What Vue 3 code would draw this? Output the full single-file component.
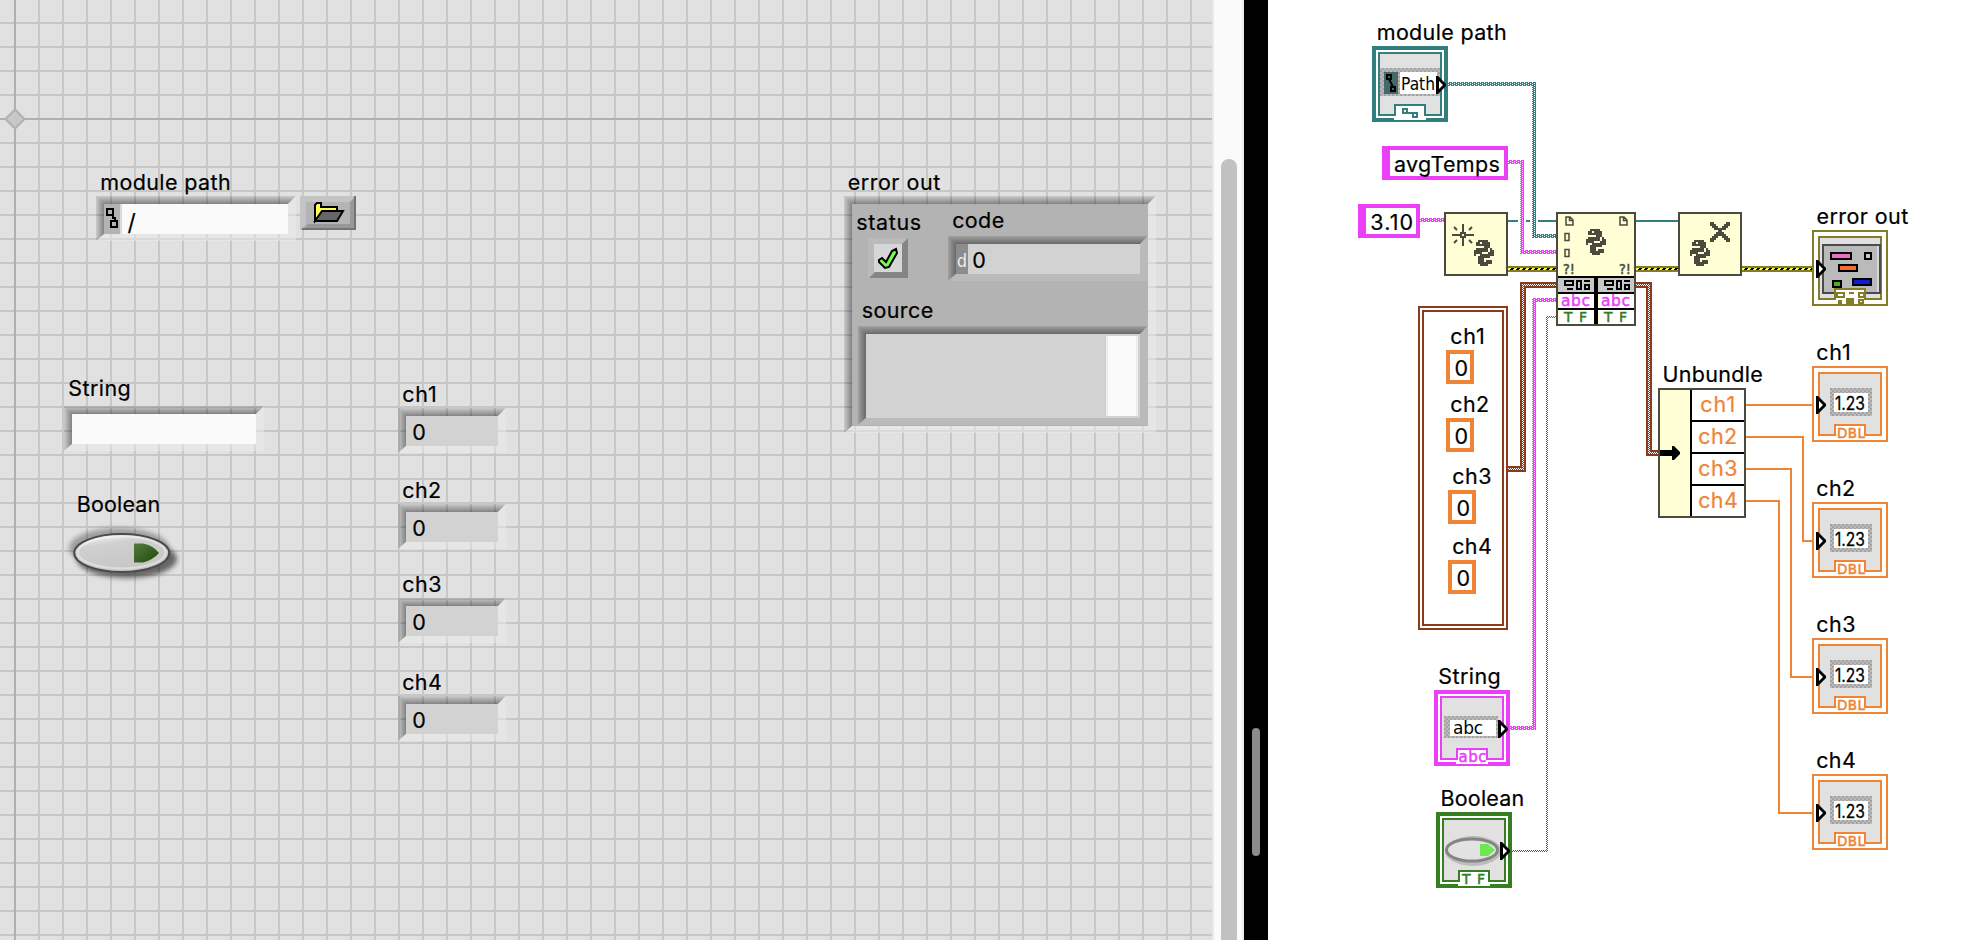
<script setup>
const fields = [
  { x: 104, y: 204, w: 184, h: 30, fill: '#fafafa' },
  { x: 72, y: 414, w: 184, h: 30, fill: '#fafafa' },
  { x: 406, y: 416, w: 92, h: 30, fill: '#d2d2d2' },
  { x: 406, y: 512, w: 92, h: 30, fill: '#d2d2d2' },
  { x: 406, y: 606, w: 92, h: 30, fill: '#d2d2d2' },
  { x: 406, y: 704, w: 92, h: 30, fill: '#d2d2d2' },
  { x: 852, y: 204, w: 296, h: 222, fill: '#b3b3b3' },
  { x: 956, y: 244, w: 184, h: 30, fill: '#d2d2d2' },
  { x: 866, y: 334, w: 274, h: 84, fill: '#d2d2d2' },
]

const panelLabels = [
  { t: 'module path', x: 101, r: 229.5, y: 190 },
  { t: 'String', x: 69, r: 129.6, y: 396 },
  { t: 'Boolean', x: 77.5, r: 159, y: 512 },
  { t: 'ch1', x: 403, r: 435.5, y: 402 },
  { t: 'ch2', x: 403, r: 440, y: 498 },
  { t: 'ch3', x: 403, r: 440.3, y: 592 },
  { t: 'ch4', x: 403, r: 440.6, y: 690 },
  { t: 'error out', x: 848.5, r: 939, y: 190 },
  { t: 'status', x: 857, r: 920, y: 229.5 },
  { t: 'code', x: 953, r: 1003, y: 228 },
  { t: 'source', x: 862.5, r: 932, y: 318 },
  { t: '0', x: 413, r: 425, y: 440 },
  { t: '0', x: 413, r: 425, y: 536 },
  { t: '0', x: 413, r: 425, y: 630 },
  { t: '0', x: 413, r: 425, y: 728 },
  { t: '0', x: 973, r: 985, y: 268 },
]

const diagramLabels = [
  { t: 'module path', x: 1377.5, r: 1505.5, y: 40 },
  { t: 'avgTemps', x: 1394.7, r: 1498.7, y: 172 },
  { t: '3.10', x: 1371, r: 1412, y: 230 },
  { t: 'error out', x: 1817.3, r: 1907, y: 224 },
  { t: 'ch1', x: 1817, r: 1849.5, y: 360 },
  { t: 'ch2', x: 1817, r: 1854, y: 496 },
  { t: 'ch3', x: 1817, r: 1854.3, y: 632 },
  { t: 'ch4', x: 1817, r: 1854.6, y: 768 },
  { t: 'Unbundle', x: 1663.3, r: 1761.5, y: 382 },
  { t: 'String', x: 1439, r: 1499.5, y: 684 },
  { t: 'Boolean', x: 1441.3, r: 1523, y: 806 },
  { t: 'ch1', x: 1451, r: 1483.5, y: 344 },
  { t: 'ch2', x: 1451, r: 1488, y: 412 },
  { t: 'ch3', x: 1453, r: 1490.3, y: 484 },
  { t: 'ch4', x: 1453, r: 1490.6, y: 554 },
  { t: '0', x: 1455.2, r: 1467, y: 376 },
  { t: '0', x: 1455.2, r: 1467, y: 444 },
  { t: '0', x: 1457.2, r: 1469, y: 516 },
  { t: '0', x: 1457.2, r: 1469, y: 586 },
]

const unbundleRows = [
  { t: 'ch1', x: 1701, r: 1734, y: 412 },
  { t: 'ch2', x: 1699, r: 1736, y: 444 },
  { t: 'ch3', x: 1699, r: 1736.3, y: 476 },
  { t: 'ch4', x: 1699, r: 1736.6, y: 508 },
]

const constants = [
  { x: 1446, y: 350 },
  { x: 1446, y: 418 },
  { x: 1448, y: 490 },
  { x: 1448, y: 560 },
]

const indicators = [366, 502, 638, 774]

const errorWires = [
  [1508, 1556],
  [1636, 1678],
  [1742, 1812],
]

const beads = [
  { c: '#337f7f', d: 'M1448 82H1536V234H1556V238H1532V86H1448z' },
  { c: '#ea3ff7', d: 'M1508 160H1524V250H1556V254H1520V164H1508z' },
  { c: '#ea3ff7', d: 'M1420 218H1444V222H1420z' },
  { c: '#ea3ff7', d: 'M1510 726H1532V298H1556V302H1536V730H1510z' },
]

const braids = ['M1508 469H1523V285H1556', 'M1636 285H1649V453H1658']

const dblWires = [
  'M1746 405H1812',
  'M1746 437H1803V541H1812',
  'M1746 469H1791V677H1812',
  'M1746 501H1779V813H1812',
]

// Turns rows of '#' cells into one path of squares.
function cells(rows, size) {
  let d = ''
  rows.forEach((row, j) => {
    for (let i = 0; i < row.length; i++) {
      if (row[i] === '#') d += `M${i * size} ${j * size}h${size}v${size}h${-size}z`
    }
  })
  return d
}

const snake = cells([
  '..#####...',
  '.##.####..',
  '.#######..',
  '.....###..',
  '.######.#.',
  '#######.##',
  '####...###',
  '#..#######',
  '..######..',
  '..###.....',
  '..###.###.',
  '..#######.',
  '...####...',
], 2)

const cross = cells([
  '##......##',
  '###....###',
  '.###..###.',
  '..######..',
  '....##....',
  '...####...',
  '..######..',
  '.###..###.',
  '###....###',
  '##......##',
], 2)

const snakes = [
  { x: 1474, y: 240 },
  { x: 1586, y: 229 },
  { x: 1690, y: 240 },
]

function bevelTop(f) {
  return `M${f.x - 8} ${f.y - 8}H${f.x + f.w + 8}L${f.x + f.w} ${f.y}H${f.x}z`
}
function bevelLeft(f) {
  return `M${f.x - 8} ${f.y - 8}L${f.x} ${f.y}V${f.y + f.h}L${f.x - 8} ${f.y + f.h + 7}z`
}
function bevelLight(f) {
  const r = f.x + f.w
  const b = f.y + f.h
  return `M${r + 8} ${f.y - 8}V${b + 7}H${f.x - 8}L${f.x} ${b}H${r}V${f.y}z`
}
</script>

<template>
  <main class="workspace">
    <section class="panel">
      <svg class="canvas" width="1214" height="940" viewBox="0 0 1214 940">
        <defs>
          <pattern id="grid" x="14" y="22" width="24" height="24" patternUnits="userSpaceOnUse">
            <rect width="24" height="24" fill="#e1e1e1" />
            <path d="M0 1H24M1 0V24" stroke="#c7c7c7" stroke-width="2" />
          </pattern>
          <linearGradient id="topShade" x1="0" y1="0" x2="0" y2="1">
            <stop offset="0" stop-color="#000" stop-opacity=".1" />
            <stop offset="1" stop-color="#000" stop-opacity=".42" />
          </linearGradient>
          <linearGradient id="leftShade" x1="0" y1="0" x2="1" y2="0">
            <stop offset="0" stop-color="#000" stop-opacity=".1" />
            <stop offset="1" stop-color="#000" stop-opacity=".42" />
          </linearGradient>
          <linearGradient id="cap" x1="0" y1="0" x2="0.35" y2="1">
            <stop offset="0" stop-color="#fff" />
            <stop offset=".35" stop-color="#d0d0d0" />
            <stop offset="1" stop-color="#c6c6c6" />
          </linearGradient>
          <linearGradient id="led" x1="0" y1="0" x2="1" y2="1">
            <stop offset="0" stop-color="#56783f" />
            <stop offset="1" stop-color="#1e4a08" />
          </linearGradient>
          <filter id="soft" x="-20%" y="-40%" width="140%" height="180%">
            <feGaussianBlur stdDeviation="2.500" />
          </filter>
        </defs>
        <rect width="1212" height="940" fill="url(#grid)" />
        <rect x="1212" width="2" height="940" fill="#e9e9e9" />
        <path d="M15 0V940M0 119H1212" stroke="#b0b0b0" stroke-width="2" fill="none" />
        <path d="M15 109.500L24.500 119L15 128.500L5.500 119z" fill="#c8c8c8" stroke="#b0b0b0" stroke-width="2" />

        <g v-for="(f, i) in fields" :key="i">
          <path :d="bevelTop(f)" fill="url(#topShade)" />
          <path :d="bevelLeft(f)" fill="url(#leftShade)" />
          <path :d="bevelLight(f)" fill="#ececec" fill-opacity=".5" v-if="i < 7" />
          <path :d="bevelLight(f)" fill="#bababa" v-else />
          <rect :x="f.x" :y="f.y" :width="f.w" :height="f.h" :fill="f.fill" />
        </g>

        <!-- path control -->
        <rect x="104" y="204" width="18" height="30" fill="#b3b3b3" />
        <path d="M107 209h6v6h-6zM111 221h6v6h-6zM113 215v3h2v3" fill="none" stroke="#000" stroke-width="2" />
        <path d="M121 204V234" stroke="#dcdcdc" stroke-width="2" />
        <text class="label slash" x="127.500" y="231">/</text>
        <g>
          <rect x="300" y="196" width="56" height="34" fill="#b4b4b4" />
          <path d="M300 196H356L350 202H306V224L300 230z" fill="#c4c4c4" />
          <path d="M356 196V230H302L308 224H350V202z" fill="#989898" />
          <path d="M355 196V229H302" fill="none" stroke="#747474" stroke-width="2" />
          <path d="M315 221V205L317 203H321V207H337V211H323L315 221z" fill="#ffff54" stroke="#000" stroke-width="2" />
          <path d="M322 211H343L337 221H315z" fill="#666" stroke="#000" stroke-width="2" />
        </g>

        <!-- boolean button -->
        <ellipse cx="127" cy="559" rx="50" ry="19" fill="#000" fill-opacity=".55" filter="url(#soft)" />
        <ellipse cx="119" cy="548" rx="50" ry="20" fill="#000" fill-opacity=".3" filter="url(#soft)" />
        <ellipse cx="121.700" cy="553" rx="47.500" ry="19" fill="url(#cap)" stroke="#4a4a4a" stroke-width="2" />
        <ellipse cx="121.700" cy="552.500" rx="44" ry="16" fill="none" stroke="#fff" stroke-opacity=".4" stroke-width="2" />
        <path d="M134 543.500H143Q153 545 159 553Q153 560 143 562.500H134z" fill="url(#led)" />

        <!-- status light -->
        <rect x="868" y="238" width="40" height="40" fill="#bababa" />
        <path d="M908 238V278H869L875 272H902V244z" fill="#858585" />
        <rect x="874" y="244" width="28" height="28" fill="#d6d6d6" />
        <path d="M879 260L882 258L886 262L892 251L896 249L897 253L889 267L885 268L879 262z" fill="#77fb4c" stroke="#000" stroke-width="2" />

        <!-- code radix and source scrollbar -->
        <rect x="956" y="244" width="12" height="30" fill="#8c8c8c" />
        <text class="tiny" x="957" y="267" fill="#eee" font-size="18" textLength="10" lengthAdjust="spacingAndGlyphs">d</text>
        <rect x="1106" y="336" width="32" height="80" fill="#ededed" />
        <rect x="1108" y="336" width="28" height="80" fill="#fafafa" />

        <text
          v-for="(l, i) in panelLabels"
          :key="'t' + i"
          class="label"
          :x="l.x - 0.8"
          :y="l.y"
          :textLength="l.r - l.x + 2"
        >{{ l.t }}</text>
      </svg>
      <div class="scroll"><div class="thumb"></div></div>
    </section>

    <div class="divider"><div class="divider-thumb"></div></div>

    <section class="diagram">
      <svg class="canvas" width="716" height="940" viewBox="1268 0 716 940">
        <defs>
          <pattern id="weave" width="2" height="2" patternUnits="userSpaceOnUse">
            <path d="M0 0h1v1h-1zM1 1h1v1h-1z" fill="#fff" />
          </pattern>
          <pattern id="bead" width="4" height="4" patternUnits="userSpaceOnUse">
            <path d="M0 0h1v1h-1zM2 1h1v1h-1zM0 2h1v1h-1zM2 3h1v1h-1z" fill="#fff" />
          </pattern>
          <pattern id="hatch" width="4" height="4" patternUnits="userSpaceOnUse">
            <rect width="4" height="4" fill="#bcbcbc" />
            <path d="M0 0h2v2h-2zM2 2h2v2h-2z" fill="#a2a2a2" />
          </pattern>
        </defs>

        <!-- wires -->
        <g v-for="(w, i) in beads" :key="'b' + i">
          <path :d="w.d" :fill="w.c" />
          <path :d="w.d" fill="url(#bead)" />
        </g>
        <g v-for="(d, i) in braids" :key="'c' + i" fill="none">
          <path :d="d" stroke="#8d3a1a" stroke-width="6" />
          <path :d="d" stroke="url(#weave)" stroke-width="2" />
        </g>
        <g fill="none">
          <path d="M1512 851H1547V317H1556" stroke="#377d22" stroke-width="2" />
          <path d="M1512 851H1547V317H1556" stroke="url(#weave)" stroke-width="2" />
        </g>
        <path d="M1508 221H1518M1526 221H1530M1538 221H1556M1636 221H1678" stroke="#337f7f" stroke-width="2" />
        <g v-for="w in errorWires" :key="w[0]">
          <path :d="`M${w[0]} 269H${w[1]}`" stroke="#827d26" stroke-width="6" />
          <path :d="`M${w[0]} 269H${w[1]}`" stroke="#000" stroke-width="2" />
          <path :d="`M${w[0]} 268.500H${w[1]}`" stroke="#ffff54" stroke-width="1" stroke-dasharray="3 3" />
          <path :d="`M${w[0]} 269.500H${w[1]}`" stroke="#ffff54" stroke-width="1" stroke-dasharray="3 3" stroke-dashoffset="1" />
        </g>
        <path v-for="d in dblWires" :key="d" :d="d" fill="none" stroke="#ee8434" stroke-width="2" />

        <!-- string constants -->
        <path d="M1382 146H1508V180H1382zM1390 150V176H1504V150z" fill="#ea3ff7" fill-rule="evenodd" />
        <path d="M1358 204H1420V238H1358zM1366 208V234H1416V208z" fill="#ea3ff7" fill-rule="evenodd" />

        <!-- cluster constant -->
        <rect x="1419" y="307" width="88" height="322" fill="#fff" stroke="#8d3a1a" stroke-width="2" />
        <rect x="1423" y="311" width="80" height="314" fill="#fff" stroke="#8d3a1a" stroke-width="2" />
        <rect
          v-for="c in constants"
          :key="c.y"
          :x="c.x + 2"
          :y="c.y + 2"
          width="24"
          height="30"
          fill="#fff"
          stroke="#ee8434"
          stroke-width="4"
        />

        <!-- python nodes -->
        <g fill="#fffed5" stroke="#4b4a3e" stroke-width="2">
          <rect x="1445" y="213" width="62" height="62" />
          <rect x="1557" y="213" width="78" height="112" />
          <rect x="1679" y="213" width="62" height="62" />
        </g>
        <path
          v-for="s in snakes"
          :key="s.x"
          :d="snake"
          :transform="`translate(${s.x} ${s.y})`"
          fill="#4b4a3e"
          shape-rendering="crispEdges"
        />
        <path :d="cross" transform="translate(1710 222)" fill="#4b4a3e" shape-rendering="crispEdges" />
        <path
          d="M1463 224V232M1463 238V246M1452 235H1460M1466 235H1474M1461 233h4v4h-4zM1454 227l3 3M1472 227l-3 3M1454 243l3-3M1472 243l-3-3"
          fill="none"
          stroke="#4b4a3e"
          stroke-width="2"
        />
        <g fill="none" stroke="#4b4a3e" stroke-width="1.500">
          <path d="M1566 217H1570L1573 220V225H1566zM1569.500 217V220.500H1573" />
          <path d="M1620 217H1624L1627 220V225H1620zM1623.500 217V220.500H1627" />
          <path d="M1565 233.500h4v7h-4zM1565 249.500h4v7h-4z" />
        </g>
        <g class="pixel" fill="#4b4a3e" stroke="#4b4a3e" font-size="14">
          <text x="1563" y="274" textLength="12" lengthAdjust="spacingAndGlyphs">?!</text>
          <text x="1619" y="274" textLength="12" lengthAdjust="spacingAndGlyphs">?!</text>
        </g>
        <path d="M1558 276H1634V324H1558z" fill="#000" />
        <g v-for="x in [1558, 1598]" :key="x">
          <rect :x="x" y="278" width="36" height="14" fill="#c8c8c8" />
          <rect :x="x" y="294" width="36" height="14" fill="#fffed5" />
          <rect :x="x" y="310" width="36" height="14" fill="#fffed5" />
          <rect :x="x + 2" y="294" width="34" height="14" fill="#fff" />
          <rect :x="x + 2" y="310" width="34" height="14" fill="#fff" />
          <path
            :transform="`translate(${x} 278)`"
            d="M7 3h8v4h-8zM9 11h6M19 3h4v8h-4zM26 3h6M27 7h4v4h-4z"
            fill="none"
            stroke="#000"
            stroke-width="2"
          />
          <text
            class="pixel"
            :x="x + 3"
            y="306"
            fill="#ea3ff7"
            stroke="#ea3ff7"
            font-size="15.500"
            textLength="29"
          >abc</text>
          <text
            class="pixel"
            :x="x + 6"
            y="322"
            fill="#377d22"
            stroke="#377d22"
            font-size="14"
            textLength="23"
          >TF</text>
        </g>

        <!-- unbundle -->
        <rect x="1659" y="389" width="86" height="128" fill="#fff" stroke="#4b4a3e" stroke-width="2" />
        <rect x="1660" y="390" width="30" height="126" fill="#fffed5" />
        <path d="M1691 390V516M1690 421H1744M1690 453H1744M1690 485H1744" stroke="#000" stroke-width="2" />
        <path d="M1660 450H1672V446H1674L1680 452V454L1674 460H1672V456H1660z" />
        <text
          v-for="l in unbundleRows"
          :key="l.y"
          class="label orange"
          :x="l.x - 0.8"
          :y="l.y"
          :textLength="l.r - l.x + 2"
        >{{ l.t }}</text>

        <!-- module path terminal -->
        <g transform="translate(1372 46)">
          <rect x="2" y="2" width="72" height="72" fill="#fff" stroke="#337f7f" stroke-width="4" />
          <rect x="7" y="7" width="62" height="62" fill="#e1e1e1" stroke="#337f7f" stroke-width="2" />
          <rect x="8" y="22" width="60" height="28" fill="url(#hatch)" />
          <rect x="12" y="26" width="14" height="22" fill="#45696a" />
          <rect x="28" y="26" width="37" height="22" fill="#fff" />
          <path d="M15 29h4v4h-4zM19 41h4v4h-4zM17 33l4 8" fill="none" stroke="#000" stroke-width="2" />
          <text class="tiny" x="29" y="44" font-size="17.500" textLength="34" lengthAdjust="spacingAndGlyphs">Path</text>
          <path d="M22 74V58H54V74z" fill="#fff" />
          <path d="M23 70V59H53V70" fill="none" stroke="#337f7f" stroke-width="2" />
          <path d="M31 63h4v4h-4zM41 67h4v4h-4zM35 67h6" fill="none" stroke="#337f7f" stroke-width="2" />
          <path d="M64 30H66L74 38V40L66 48H64z" />
          <path d="M67 35L71 39L67 43z" fill="#fff" />
        </g>

        <!-- string terminal -->
        <g transform="translate(1434 690)">
          <rect x="2" y="2" width="72" height="72" fill="#fff" stroke="#ea3ff7" stroke-width="4" />
          <rect x="7" y="7" width="62" height="62" fill="#e1e1e1" stroke="#ea3ff7" stroke-width="2" />
          <rect x="10" y="26" width="54" height="22" fill="url(#hatch)" />
          <rect x="16" y="30" width="46" height="16" fill="#fff" />
          <text class="tiny" x="19" y="44" font-size="17" textLength="30">abc</text>
          <path d="M22 74V58H54V74z" fill="#fff" />
          <path d="M23 70V59H53V70" fill="none" stroke="#ea3ff7" stroke-width="2" />
          <text class="pixel" x="24.500" y="72" fill="#ea3ff7" stroke="#ea3ff7" font-size="15" textLength="28">abc</text>
          <path d="M64 30H66L74 38V40L66 48H64z" />
          <path d="M67 35L71 39L67 43z" fill="#fff" />
        </g>

        <!-- boolean terminal -->
        <g transform="translate(1436 812)">
          <rect x="2" y="2" width="72" height="72" fill="#fff" stroke="#377d22" stroke-width="4" />
          <rect x="7" y="7" width="62" height="62" fill="#e1e1e1" stroke="#377d22" stroke-width="2" />
          <ellipse cx="37" cy="39" rx="28" ry="15" fill="#bcbcbc" />
          <ellipse cx="36" cy="38" rx="25.500" ry="11" fill="#e2e2e2" stroke="#858585" stroke-width="3" />
          <path d="M44 32H52L59 38L52 44H44z" fill="#6ce850" />
          <path d="M22 74V58H54V74z" fill="#fff" />
          <path d="M23 70V59H53V70" fill="none" stroke="#377d22" stroke-width="2" />
          <text class="pixel" x="26" y="72" fill="#377d22" stroke="#377d22" font-size="14" textLength="23">TF</text>
          <path d="M64 30H66L74 38V40L66 48H64z" />
          <path d="M67 35L71 39L67 43z" fill="#fff" />
        </g>

        <!-- error out terminal -->
        <g transform="translate(1812 230)">
          <rect x="1" y="1" width="74" height="74" fill="#fff" stroke="#827d26" stroke-width="2" />
          <rect x="7" y="7" width="62" height="62" fill="#e1dfe3" stroke="#827d26" stroke-width="2" />
          <rect x="11" y="15" width="57" height="48" fill="#bababa" stroke="#4b4b4b" stroke-width="2" />
          <path d="M66 16V62" stroke="#d8d8d8" stroke-width="2" />
          <g stroke="#000" stroke-width="2">
            <rect x="19" y="23" width="20" height="6" fill="#ea70c8" />
            <rect x="53" y="23" width="6" height="6" fill="#c8c8c8" />
            <rect x="27" y="35" width="18" height="6" fill="#f26c3c" />
            <rect x="21" y="51" width="8" height="6" fill="#4fae32" />
            <rect x="41" y="49" width="18" height="6" fill="#0a1ed2" />
          </g>
          <path d="M22 74V58H54V74z" fill="#fff" />
          <path d="M23 70V59H53V70" fill="none" stroke="#827d26" stroke-width="2" />
          <path d="M25 63h7v4h-7zM37 63h5M47 63h5v4h-5zM47 70h4v3h-4z" fill="none" stroke="#827d26" stroke-width="2" />
          <path d="M34 68h8v6h-8zM26 70h4v4h-4z" fill="#827d26" />
          <path d="M4 30H6L14 38V40L6 48H4z" />
          <path d="M7 35L11 39L7 43z" fill="#fff" />
        </g>

        <!-- numeric indicators -->
        <g v-for="y in indicators" :key="y" :transform="`translate(1812 ${y})`">
          <rect x="1" y="1" width="74" height="74" fill="#fff" stroke="#ee8434" stroke-width="2" />
          <rect x="7" y="7" width="62" height="62" fill="#e1e1e1" stroke="#ee8434" stroke-width="2" />
          <rect x="18" y="22" width="42" height="28" fill="url(#hatch)" />
          <rect x="22" y="27" width="34" height="19" fill="#fff" />
          <text class="digits" x="23" y="44" textLength="30" lengthAdjust="spacingAndGlyphs">1.23</text>
          <path d="M24 72V60H52V72z" fill="#fff" />
          <path d="M23 70V59H53V70" fill="none" stroke="#ee8434" stroke-width="2" />
          <text class="pixel" x="25" y="72" fill="#ee8434" stroke="#ee8434" font-size="13.500" textLength="28">DBL</text>
          <path d="M4 30H6L14 38V40L6 48H4z" />
          <path d="M7 35L11 39L7 43z" fill="#fff" />
        </g>

        <text
          v-for="(l, i) in diagramLabels"
          :key="'l' + i"
          class="label"
          :x="l.x - 0.8"
          :y="l.y"
          :textLength="l.r - l.x + 2"
        >{{ l.t }}</text>
      </svg>
    </section>
  </main>
</template>

<style scoped>
.workspace {
  display: flex;
  width: 1984px;
  height: 940px;
  overflow: hidden;
  background: #fff;
}
.panel {
  display: flex;
  width: 1244px;
  height: 940px;
}
.canvas {
  display: block;
  flex: none;
}
.label {
  font-family: Inter, "Liberation Sans", sans-serif;
  font-size: 21.5px;
  stroke: #000;
  stroke-width: 0.2px;
}
.label.orange {
  fill: #ee8434;
  stroke: #ee8434;
}
.label.slash {
  font-size: 23px;
}
.tiny {
  font-family: "DejaVu Sans", sans-serif;
}
.digits {
  font-family: Inter, "Liberation Sans", sans-serif;
  font-size: 18px;
  stroke: #000;
  stroke-width: 0.3px;
}
.pixel {
  font-family: "DejaVu Sans", sans-serif;
  stroke-width: 0.5px;
}
.scroll {
  box-sizing: border-box;
  width: 30px;
  height: 940px;
  padding: 159px 5px 0 7px;
  border-right: 2px solid #ececec;
  background: #fafafa;
}
.thumb {
  width: 16px;
  height: 800px;
  border-radius: 8px 8px 0 0;
  background: #c1c1c1;
}
.divider {
  box-sizing: border-box;
  width: 24px;
  height: 940px;
  padding: 728px 8px 0;
  background: #000;
}
.divider-thumb {
  width: 8px;
  height: 128px;
  border-radius: 4px;
  background: #8c8c8c;
}
.diagram {
  flex: 1;
  background: #fff;
}
</style>
